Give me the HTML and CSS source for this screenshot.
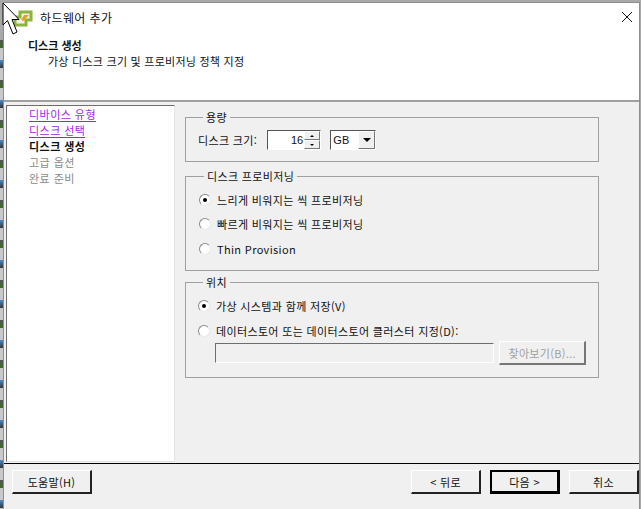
FILE: index.html
```html
<!DOCTYPE html>
<html lang="ko">
<head>
  <meta charset="UTF-8" />
  <title>하드웨어 추가</title>
  <link rel="stylesheet" href="styles.css">
</head>
<body>
  <div class="desktop">
    <div class="strip"></div>
    <div class="window">
      <div class="top">
        <div class="titlebar">
          <svg class="logo" width="24" height="20" viewBox="0 0 24 20">
            <path d="M9 5 H20 V13 H15 V18 H4 V10 H9 Z" fill="#f6f3e6" stroke="#8cb43c" stroke-width="3"/>
            <path d="M10 13 L13 8 H18 L15 11 L13 14 Z" fill="#e8a020"/>
          </svg>
          <span class="title">하드웨어 추가</span>
          <svg class="close" width="12" height="12" viewBox="0 0 12 12">
            <path d="M1 1 L11 11 M11 1 L1 11" stroke="#111" stroke-width="1" fill="none"/>
          </svg>
        </div>
        <div class="heading">
          <div class="heading-main">디스크 생성</div>
          <div class="heading-sub">가상 디스크 크기 및 프로비저닝 정책 지정</div>
        </div>
      </div>

      <div class="middle">
        <div class="steps">
          <a class="step visited">디바이스 유형</a>
          <a class="step visited">디스크 선택</a>
          <span class="step current">디스크 생성</span>
          <span class="step todo">고급 옵션</span>
          <span class="step todo">완료 준비</span>
        </div>

        <div class="content">
          <fieldset class="group group-size">
            <legend>용량</legend>
            <div class="size-row">
              <span>디스크 크기:</span>
              <div class="spinner">
                <span class="spinner-value">16</span>
                <div class="spinner-btns">
                  <span class="spin-btn"><i class="arrow-up"></i></span>
                  <span class="spin-btn"><i class="arrow-down"></i></span>
                </div>
              </div>
              <div class="combo">
                <span class="combo-value">GB</span>
                <span class="combo-btn"><i class="arrow-down big"></i></span>
              </div>
            </div>
          </fieldset>

          <fieldset class="group group-prov">
            <legend>디스크 프로비저닝</legend>
            <div class="radio-row"><span class="radio on"></span>느리게 비워지는 씩 프로비저닝</div>
            <div class="radio-row"><span class="radio"></span>빠르게 비워지는 씩 프로비저닝</div>
            <div class="radio-row"><span class="radio"></span>Thin Provision</div>
          </fieldset>

          <fieldset class="group group-loc">
            <legend>위치</legend>
            <div class="radio-row"><span class="radio on"></span>가상 시스템과 함께 저장(V)</div>
            <div class="radio-row"><span class="radio"></span>데이터스토어 또는 데이터스토어 클러스터 지정(D):</div>
            <div class="browse-row">
              <div class="path-input"></div>
              <button class="btn disabled">찾아보기(B)...</button>
            </div>
          </fieldset>
        </div>
      </div>

      <div class="footer">
        <button class="btn btn-help">도움말(H)</button>
        <div class="nav">
          <button class="btn">&lt; 뒤로</button>
          <button class="btn default">다음 &gt;</button>
          <button class="btn">취소</button>
        </div>
      </div>
    </div>
  </div>

  <!-- mouse pointer sitting on top of the dialog -->
  <svg class="cursor" width="18" height="34" viewBox="0 0 18 34">
    <path d="M1 1 L1 23 L5.500 18.500 L11 32 L15 30 L10 17.500 L17 17.500 Z" fill="#fff" stroke="#000" stroke-width="1"/>
  </svg>
</body>
</html>
```

FILE: styles.css
```css
* { box-sizing: border-box; }

html, body {
  margin: 0;
  height: 100%;
  overflow: hidden;
}

body {
  font-family: "Noto Sans CJK KR", "Noto Sans", sans-serif;
  font-size: 11px;
  color: #111;
  background: #a9a9a9;
}

.desktop {
  display: flex;
  height: 509px;
  padding-top: 2px;
}

.strip {
  width: 3px;
  margin-top: 38px;
  background: repeating-linear-gradient(to bottom, #555 0, #3c6a2a 8px, #c9c9c9 8px, #c9c9c9 20px, #4d8ec4 20px, #333 28px, #c9c9c9 28px, #c9c9c9 40px);
}

.window {
  width: 637px;
  display: flex;
  flex-direction: column;
  background: #f0f0f0;
  border-top: 1px solid #8e8e8e;
  border-left: 1px solid #8e8e8e;
  border-right: 1px solid #8e8e8e;
}

.top {
  height: 99px;
  background: #fff;
  border-bottom: 2px solid #a0a0a0;
  flex-shrink: 0;
}

.titlebar {
  display: flex;
  align-items: center;
  height: 28px;
  padding: 0 6px 0 7px;
}

.logo { margin-right: 5px; }

.title {
  font-size: 12px;
  letter-spacing: 0.4px;
  flex: 1;
}

.heading { padding: 6px 0 0 24px; }

.heading-main {
  font-weight: 700;
  line-height: 16px;
}

.heading-sub {
  padding-left: 20px;
  line-height: 16px;
  letter-spacing: 0.25px;
}

.middle {
  display: flex;
  height: 359px;
  padding: 3px 0 0 2px;
  flex-shrink: 0;
}

.steps {
  width: 169px;
  height: 357px;
  background: #fff;
  border-top: 1px solid #6d6d6d;
  border-left: 1px solid #6d6d6d;
  border-right: 1px solid #e3e3e3;
  border-bottom: 1px solid #e3e3e3;
  padding: 0 0 0 22px;
  display: flex;
  flex-direction: column;
  align-items: flex-start;
}

.step {
  line-height: 16px;
  letter-spacing: 0.45px;
}

.step.visited {
  color: #a21fe8;
  border-bottom: 1px solid #a21fe8;
  height: 16px;
}

.step.current { font-weight: 700; }

.step.todo { color: #8a8a8a; }

.content {
  width: 414px;
  margin-left: 10px;
  padding-top: 5px;
  display: flex;
  flex-direction: column;
}

.group {
  margin: 0;
  padding: 0 12px;
  min-width: 0;
  border: 1px solid #a0a0a0;
}

.group legend {
  margin-left: 5px;
  padding: 0 3px;
  line-height: 14px;
  letter-spacing: 0.35px;
}

.group-size { height: 52px; }

.group-prov {
  height: 102px;
  margin-top: 7px;
}

.group-loc {
  height: 103px;
  margin-top: 4px;
}

.size-row {
  display: flex;
  align-items: center;
  height: 24px;
  margin-top: 4px;
  letter-spacing: 0.35px;
}

.spinner {
  display: flex;
  width: 54px;
  height: 20px;
  margin-left: 10px;
  background: #fff;
  border-top: 1px solid #555;
  border-left: 1px solid #555;
  border-right: 1px solid #fff;
  border-bottom: 1px solid #fff;
}

.spinner-value {
  flex: 1;
  text-align: right;
  padding-right: 1px;
  line-height: 18px;
  letter-spacing: 0;
  font-family: "Liberation Sans", sans-serif;
  font-size: 11px;
}

.spinner-btns {
  display: flex;
  flex-direction: column;
  width: 16px;
}

.spin-btn, .combo-btn {
  display: flex;
  align-items: center;
  justify-content: center;
  background: #f0f0f0;
  border-top: 1px solid #fff;
  border-left: 1px solid #fff;
  border-right: 1px solid #777;
  border-bottom: 1px solid #777;
}

.spin-btn { height: 9px; }

.arrow-up, .arrow-down {
  display: block;
  width: 0;
  height: 0;
  border-left: 2px solid transparent;
  border-right: 2px solid transparent;
}

.arrow-up { border-bottom: 2px solid #000; }
.arrow-down { border-top: 2px solid #000; }

.arrow-down.big {
  border-left-width: 4px;
  border-right-width: 4px;
  border-top-width: 4px;
}

.combo {
  display: flex;
  width: 46px;
  height: 20px;
  margin-left: 9px;
  background: #fff;
  border-top: 1px solid #555;
  border-left: 1px solid #555;
  border-right: 1px solid #fff;
  border-bottom: 1px solid #fff;
}

.combo-value {
  flex: 1;
  padding-left: 2px;
  line-height: 18px;
  font-family: "Liberation Sans", sans-serif;
}

.combo-btn {
  width: 17px;
  height: 18px;
}

.radio-row {
  display: flex;
  align-items: center;
  height: 16px;
  letter-spacing: 0.35px;
}

.radio {
  width: 12px;
  height: 12px;
  margin-right: 6px;
  border-radius: 50%;
  background: #fff;
  border: 1px solid #8a8a8a;
  border-right-color: #e8e8e8;
  border-bottom-color: #e8e8e8;
  display: flex;
  align-items: center;
  justify-content: center;
  flex-shrink: 0;
}

.radio.on::after {
  content: "";
  width: 4px;
  height: 4px;
  border-radius: 50%;
  background: #000;
}

.group-prov .radio-row { margin-top: 8px; }
.group-prov .radio-row:first-of-type { margin-top: 9px; }
.group-prov .radio-row:last-of-type { margin-top: 9px; }
.group-prov { padding-left: 13px; }
.group-loc .radio-row:first-of-type { margin-top: 9px; }
.group-loc .radio-row + .radio-row { margin-top: 9px; }

.browse-row {
  display: flex;
  align-items: center;
  margin: 2px 0 0 17px;
}

.path-input {
  width: 287px;
  height: 20px;
  background: #f0f0f0;
  border-top: 1px solid #6d6d6d;
  border-left: 1px solid #6d6d6d;
  border-right: 1px solid #fff;
  border-bottom: 1px solid #fff;
}

.btn {
  font: inherit;
  letter-spacing: 0.3px;
  color: #111;
  width: 70px;
  height: 24px;
  padding: 0;
  background: #f0f0f0;
  border-top: 1px solid #fff;
  border-left: 1px solid #fff;
  border-right: 2px solid #222;
  border-bottom: 2px solid #222;
}

.btn.disabled {
  width: 89px;
  margin-left: 5px;
  color: #a0a0a0;
  border-right-color: #777;
  border-bottom-color: #777;
}

.btn.default {
  border: 2px solid #000;
  border-right-width: 3px;
  border-bottom-width: 3px;
}

.footer {
  display: flex;
  justify-content: space-between;
  height: 40px;
  flex-shrink: 0;
  margin-top: 2px;
  padding: 6px 0 0 8px;
  border-top: 1px solid #000;
  width: 100%;
}

.btn-help { width: 80px; }

.nav {
  display: flex;
  gap: 9px;
}

.cursor {
  position: absolute;
  left: 2px;
  top: 2px;
}
```
